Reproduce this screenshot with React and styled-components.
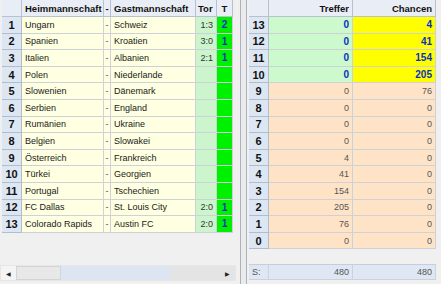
import React from 'react'
import styled, { createGlobalStyle } from 'styled-components'

const Global = createGlobalStyle`
  html, body { margin: 0; padding: 0; }
  body {
    background: #f0f0f0;
    font-family: "Liberation Sans", Arial, sans-serif;
    font-size: 9px;
  }
`

const Window = styled.div`
  width: 441px;
  height: 284px;
  display: flex;
  background: #f0f0f0;
  overflow: hidden;
`

const LeftPane = styled.div`
  width: 238px;
  padding-left: 2px;
  display: flex;
  flex-direction: column;
  border-right: 1px solid #a9b2bf;
`

const Splitter = styled.div`
  width: 5px;
  background: #ebebeb;
`

const RightPane = styled.div`
  flex: 1;
  display: flex;
  flex-direction: column;
  border-left: 1px solid #a9b2bf;
  padding-left: 2px;
`

const Grid = styled.div`
  display: grid;
  grid-template-columns: ${p => p.$cols};
  grid-auto-rows: 16.6px;
  grid-template-rows: 17px;
`

const Cell = styled.div`
  display: flex;
  align-items: center;
  justify-content: ${p => p.$align || 'flex-start'};
  padding: 0 3px;
  background: ${p => p.$bg || '#ffffe1'};
  color: ${p => p.$color || '#1a1a1a'};
  font-weight: ${p => (p.$bold ? 700 : 400)};
  font-size: ${p => p.$size || '9px'};
  border-right: 1px solid #cdd2d8;
  border-bottom: 1px solid #cdd2d8;
  white-space: nowrap;
  overflow: hidden;
  box-sizing: border-box;
`

const HeadCell = styled(Cell)`
  background: #e9eef6;
  font-weight: 700;
  color: #111;
  font-size: 9.5px;
  border-right: 1px solid #b7c1cf;
  border-bottom: 1px solid #b7c1cf;
`

const RowHead = styled(Cell)`
  justify-content: center;
  background: #dde6f3;
  font-weight: 700;
  color: #111;
  font-size: 11px;
  border-right: 1px solid #b2bdcc;
  border-bottom: 1px solid #b2bdcc;
  padding: 0;
`

const Spacer = styled.div`
  flex: 1;
`

const ScrollBar = styled.div`
  height: 14px;
  width: 234px;
  margin: 0 0 3px -2px;
  display: flex;
  background: #dde4ee;
  border: 1px solid #e6e6e6;
`

const ArrowBtn = styled.div`
  width: 15px;
  display: flex;
  align-items: center;
  justify-content: center;
  background: ${p => p.$bg || '#f4f4f4'};
  color: #222;
  font-size: 6px;
`

const Thumb = styled.div`
  width: 45px;
  background: #e8e8e8;
  border: 1px solid #d4d4d4;
  box-sizing: border-box;
`

const Track = styled.div`
  flex: ${p => p.$fixed ? `0 0 ${p.$fixed}` : 1};
  background: ${p => p.$bg};
`

const SumRow = styled(Grid)`
  grid-template-rows: 16px;
  margin-bottom: 4px;
`

const SumCell = styled(Cell)`
  background: #dfe7f4;
  color: #555;
  border-top: 1px solid #c5cfdc;
`

const leftCols = '20px 82px 7px 85px 21px 16px'
const rightCols = '20px 84px 83px'

const matches = [
  ['Ungarn', 'Schweiz', '1:3', '2'],
  ['Spanien', 'Kroatien', '3:0', '1'],
  ['Italien', 'Albanien', '2:1', '1'],
  ['Polen', 'Niederlande', '', ''],
  ['Slowenien', 'Dänemark', '', ''],
  ['Serbien', 'England', '', ''],
  ['Rumänien', 'Ukraine', '', ''],
  ['Belgien', 'Slowakei', '', ''],
  ['Österreich', 'Frankreich', '', ''],
  ['Türkei', 'Georgien', '', ''],
  ['Portugal', 'Tschechien', '', ''],
  ['FC Dallas', 'St. Louis City', '2:0', '1'],
  ['Colorado Rapids', 'Austin FC', '2:0', '1'],
]

const stats = [
  [13, 0, 4, true], [12, 0, 41, true], [11, 0, 154, true], [10, 0, 205, true],
  [9, 0, 76], [8, 0, 0], [7, 0, 0], [6, 0, 0], [5, 4, 0], [4, 41, 0],
  [3, 154, 0], [2, 205, 0], [1, 76, 0], [0, 0, 0],
]

const App = () => (
  <Window>
    <Global />
    <LeftPane>
      <Grid $cols={leftCols}>
        <HeadCell />
        <HeadCell>Heimmannschaft</HeadCell>
        <HeadCell $align="center" style={{ padding: 0 }}>-</HeadCell>
        <HeadCell>Gastmannschaft</HeadCell>
        <HeadCell style={{ padding: '0 2px' }}>Tor</HeadCell>
        <HeadCell $align="center">T</HeadCell>
        {matches.map(([home, away, score, t], i) => (
          <React.Fragment key={i}>
            <RowHead>{i + 1}</RowHead>
            <Cell>{home}</Cell>
            <Cell $align="center" $color="#555" style={{ padding: 0 }}>-</Cell>
            <Cell>{away}</Cell>
            <Cell $bg="#cdf5cd" $align="flex-end" $color="#333">{score}</Cell>
            <Cell $bg="#00f000" $align="center" $bold $size="10px" $color="#0a2fc8">{t}</Cell>
          </React.Fragment>
        ))}
      </Grid>
      <Spacer />
      <ScrollBar>
        <ArrowBtn>◀</ArrowBtn>
        <Thumb />
        <Track $bg="#dce5f1" />
        <Track $bg="#e4e4e4" $fixed="50px" />
        <ArrowBtn $bg="#e4e4e4">▶</ArrowBtn>
      </ScrollBar>
    </LeftPane>
    <Splitter />
    <RightPane>
      <Grid $cols={rightCols}>
        <HeadCell />
        <HeadCell $align="flex-end">Treffer</HeadCell>
        <HeadCell $align="flex-end">Chancen</HeadCell>
        {stats.map(([n, hit, chance, hot]) => (
          <React.Fragment key={n}>
            <RowHead>{n}</RowHead>
            <Cell $align="flex-end" $bg={hot ? '#ccfacc' : '#ffe3c6'} $bold={hot} $size={hot ? '10px' : '9px'} $color={hot ? '#0a2fc8' : '#555'}>{hit}</Cell>
            <Cell $align="flex-end" $bg={hot ? '#ffff00' : '#ffe3c6'} $bold={hot} $size={hot ? '10px' : '9px'} $color={hot ? '#0a2fc8' : '#555'}>{chance}</Cell>
          </React.Fragment>
        ))}
      </Grid>
      <Spacer />
      <SumRow $cols={rightCols}>
        <SumCell>S:</SumCell>
        <SumCell $align="flex-end">480</SumCell>
        <SumCell $align="flex-end">480</SumCell>
      </SumRow>
    </RightPane>
  </Window>
)

export default App
